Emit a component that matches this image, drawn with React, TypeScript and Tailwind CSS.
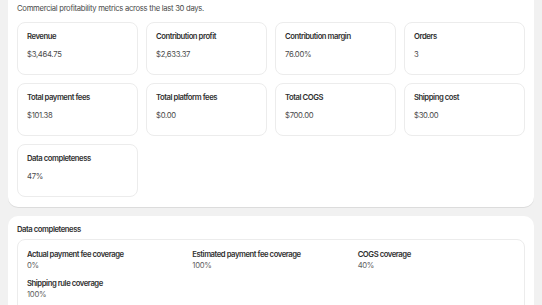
import React from "react";

const metrics = [
  { label: "Revenue", value: "$3,464.75" },
  { label: "Contribution profit", value: "$2,633.37" },
  { label: "Contribution margin", value: "76.00%" },
  { label: "Orders", value: "3" },
  { label: "Total payment fees", value: "$101.38" },
  { label: "Total platform fees", value: "$0.00" },
  { label: "Total COGS", value: "$700.00" },
  { label: "Shipping cost", value: "$30.00" },
  { label: "Data completeness", value: "47%" },
];

const coverage = [
  { label: "Actual payment fee coverage", value: "0%" },
  { label: "Estimated payment fee coverage", value: "100%" },
  { label: "COGS coverage", value: "40%" },
  { label: "Shipping rule coverage", value: "100%" },
];

const App: React.FC = () => {
  return (
    <div
      className="w-[542px] h-[305px] overflow-hidden bg-[#f1f1f1] px-2 text-[#303030] tracking-[-0.3px]"
      style={{ fontFamily: "Inter, 'Noto Sans', sans-serif" }}
    >
      {/* Metrics card */}
      <div className="bg-white rounded-b-[10px] shadow-[0_1px_0_#dcdcdc] px-[9px] pt-[4px] pb-[10px]">
        <p className="text-[7.7px] leading-[10px] text-[#4a4a4a] m-0 mb-[8px]">
          Commercial profitability metrics across the last 30 days.
        </p>
        <div className="grid grid-cols-4 gap-2">
          {metrics.map((m) => (
            <div
              key={m.label}
              className="h-[53px] rounded-[8px] border border-[#ececec] px-[9px] pt-[9px]"
            >
              <div className="text-[7.7px] leading-[10px] font-semibold tracking-[-0.45px]">{m.label}</div>
              <div className="text-[7.7px] leading-[10px] text-[#4a4a4a] mt-[8px]">{m.value}</div>
            </div>
          ))}
        </div>
      </div>

      {/* Data completeness card */}
      <div className="mt-[9px] bg-white rounded-t-[10px] px-[9px] pt-[9px] h-[120px]">
        <h2 className="text-[7.7px] leading-[10px] font-semibold tracking-[-0.45px] m-0 mb-[4px]">Data completeness</h2>
        <div className="rounded-[8px] border border-[#ececec] px-[9px] pt-[10px] pb-4 grid grid-cols-3 gap-x-2 gap-y-[8px]">
          {coverage.map((c) => (
            <div key={c.label}>
              <div className="text-[7.7px] leading-[10px] font-semibold tracking-[-0.45px]">{c.label}</div>
              <div className="text-[7.7px] leading-[10px] text-[#616161] mt-[1px]">{c.value}</div>
            </div>
          ))}
        </div>
      </div>
    </div>
  );
};

export default App;
